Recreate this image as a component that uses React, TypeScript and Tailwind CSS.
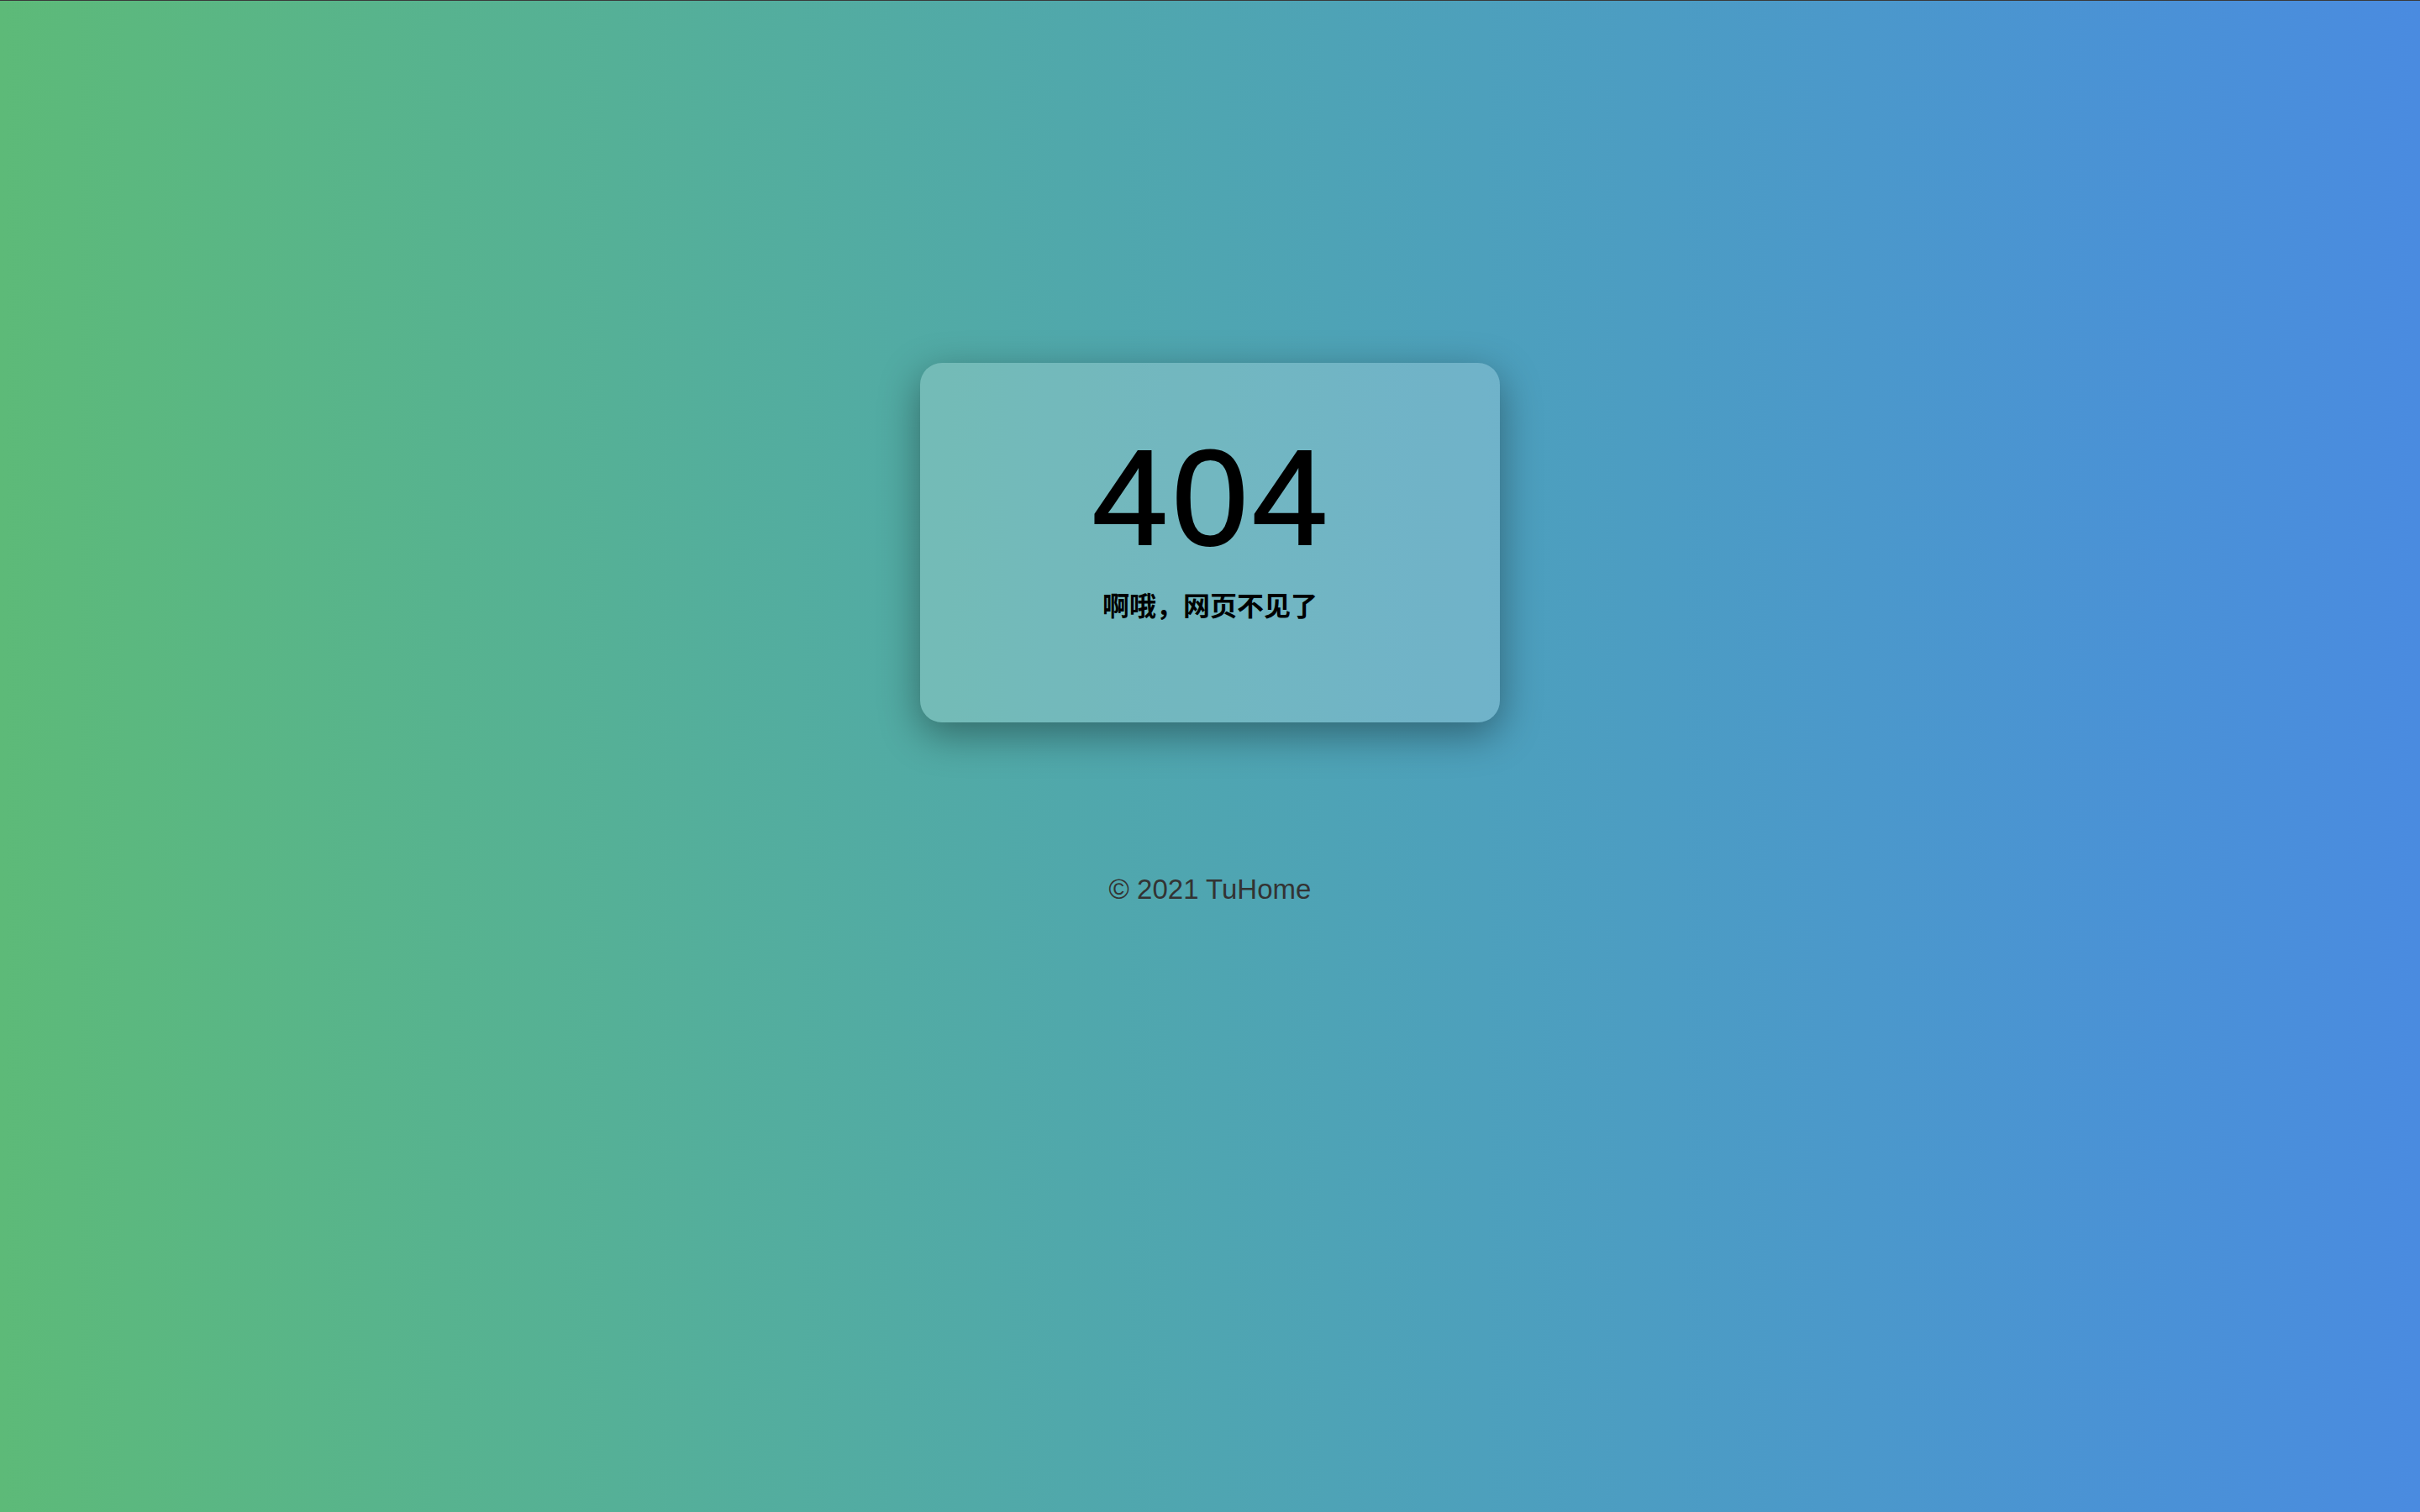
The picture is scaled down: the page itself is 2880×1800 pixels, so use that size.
const NotFound = () => (
    <div className="w-[690px] h-[428px] flex flex-col items-center pt-[79px] rounded-[26px] bg-white/20 shadow-[0_14px_48px_rgba(0,0,0,0.38)]">
        <div className="pl-[5px] text-[162px] leading-none tracking-[5px] text-black font-['Liberation_Sans',Arial,sans-serif] [-webkit-text-stroke:2px_black]">
            404
        </div>
        <div className="mt-[30px] text-[32px] leading-none font-bold text-black font-['Noto_Sans_CJK_SC',sans-serif]">
            啊哦，网页不见了
        </div>
    </div>
);

export default function App() {
    return (
        <div className="w-full h-[1800px] flex flex-col items-center pt-[431px] border-t border-[#3a3a3a] bg-gradient-to-r from-[#5dba78] to-[#4a8be0]">
            <NotFound />
            <div className="mt-[182px] text-[33px] leading-none text-[#333333] font-['Liberation_Sans',Arial,sans-serif]">
                © 2021 TuHome
            </div>
        </div>
    );
}
